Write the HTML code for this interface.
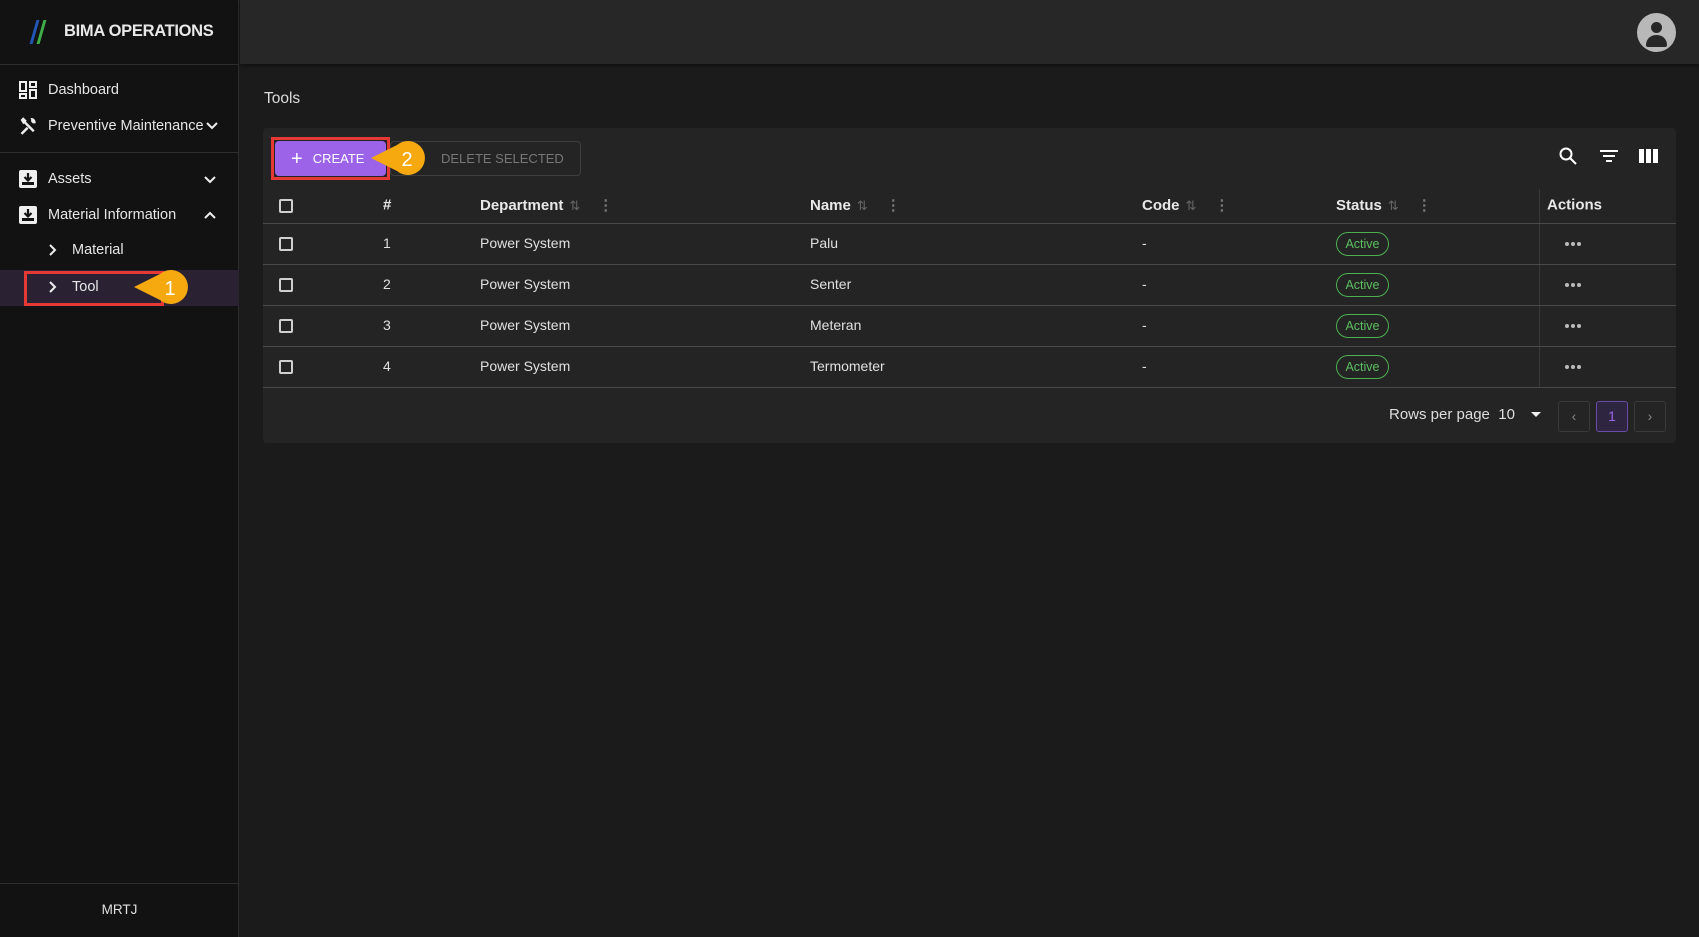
<!DOCTYPE html>
<html><head><meta charset="utf-8"><style>
*{box-sizing:border-box;margin:0;padding:0}
body{width:1699px;height:937px;background:#1b1b1b;font-family:"Liberation Sans",sans-serif;color:#e0e0e0;position:relative;overflow:hidden;font-size:14px}
.abs{position:absolute}
#side{left:0;top:0;width:239px;height:937px;background:#121212;border-right:1px solid #2c2c2c}
.hr{position:absolute;left:0;width:239px;height:1px;background:#2e2e2e}
.nav{position:absolute;left:48px;font-size:14.5px;color:#e6e6e6;transform:translateY(-50%)}
.ic{position:absolute;left:18px;transform:translateY(-50%)}
#top{left:240px;top:0;width:1459px;height:64px;background:#272727;box-shadow:0 2px 4px rgba(0,0,0,.4)}
#card{left:263px;top:128px;width:1413px;height:315px;background:#242424;border-radius:4px}
.th{position:absolute;top:205px;transform:translateY(-50%);font-weight:bold;font-size:15px;color:#e8e8e8}
.td{position:absolute;transform:translateY(-50%);font-size:14px;color:#e0e0e0}
.cb{position:absolute;left:279px;width:14px;height:14px;border:2px solid #d0d0d0;border-radius:2px;transform:translateY(-50%)}
.rl{position:absolute;left:263px;width:1413px;height:1px;background:#4a4a4a}
.badge{position:absolute;left:1336px;width:53px;height:24px;border:1px solid #4caf50;border-radius:12px;color:#5cbf60;font-size:12.5px;text-align:center;line-height:22px;transform:translateY(-50%)}
.dots{position:absolute;left:1564px;transform:translateY(-50%)}
.srt{color:#666;font-weight:normal;font-size:13px;margin-left:6px}
.kb{color:#777;font-weight:bold;margin-left:18px}
.pg{position:absolute;top:401px;width:32px;height:31px;border:1px solid #3a3a3a;border-radius:3px;color:#888;text-align:center;line-height:29px;font-size:14px}
.chev{position:absolute;left:204px;transform:translateY(-50%)}
</style></head><body>
<div id="side" class="abs">
 <div class="abs" style="left:33px;top:20px;width:3px;height:24px;background:#2456b8;transform:skewX(-16deg)"></div>
 <div class="abs" style="left:40px;top:20px;width:3px;height:24px;background:#3fae49;transform:skewX(-16deg)"></div>
 <div class="abs" style="left:64px;top:22px;font-weight:bold;font-size:16.5px;color:#e8e8e8;letter-spacing:-.3px">BIMA OPERATIONS</div>
 <div class="hr" style="top:64px"></div>
 <div class="hr" style="top:152px"></div>
 <div class="hr" style="top:883px"></div>
 <svg class="ic" style="top:90px" width="20" height="20" viewBox="0 0 20 20" fill="none" stroke="#eee" stroke-width="2"><rect x="2" y="2" width="6" height="9"/><rect x="12" y="2" width="6" height="5"/><rect x="2" y="14" width="6" height="4"/><rect x="12" y="10" width="6" height="8"/></svg>
 <div class="nav" style="top:90px">Dashboard</div>
 <svg class="ic" style="top:126px" width="21" height="21" viewBox="0 0 24 24" fill="#eee"><path d="M3 5l3-3 4 4-1 1 10 10-2 2L7 9 6 10z M14 3a5 5 0 0 1 6 6l-3 0-2-2 0-3z M10 13l-7 7 2 2 7-7z"/></svg>
 <div class="nav" style="top:126px">Preventive Maintenance</div>
 <svg class="abs" style="left:206px;top:121px" width="12" height="10" viewBox="0 0 12 10" fill="none" stroke="#eee" stroke-width="2"><path d="M1 2l5 5 5-5"/></svg>
 <svg class="ic" style="top:179px" width="20" height="20" viewBox="0 0 20 20"><rect x="1" y="1" width="18" height="18" rx="2" fill="#eee"/><path d="M10 4v7M6.5 8l3.5 3.5 3.5-3.5" stroke="#121212" stroke-width="2.2" fill="none"/><rect x="4" y="13" width="12" height="3" fill="#121212"/></svg>
 <div class="nav" style="top:179px">Assets</div>
 <svg class="chev" style="top:180px" width="12" height="10" viewBox="0 0 12 10" fill="none" stroke="#eee" stroke-width="2"><path d="M1 2l5 5 5-5"/></svg>
 <svg class="ic" style="top:215px" width="20" height="20" viewBox="0 0 20 20"><rect x="1" y="1" width="18" height="18" rx="2" fill="#eee"/><path d="M10 4v7M6.5 8l3.5 3.5 3.5-3.5" stroke="#121212" stroke-width="2.2" fill="none"/><rect x="4" y="13" width="12" height="3" fill="#121212"/></svg>
 <div class="nav" style="top:215px">Material Information</div>
 <svg class="chev" style="top:215px" width="12" height="10" viewBox="0 0 12 10" fill="none" stroke="#eee" stroke-width="2"><path d="M1 8l5-5 5 5"/></svg>
 <div class="abs" style="left:0;top:270px;width:239px;height:36px;background:#2a2233"></div>
 <svg class="abs" style="left:48px;top:244px" width="10" height="12" viewBox="0 0 10 12" fill="none" stroke="#eee" stroke-width="2"><path d="M2 1l5 5-5 5"/></svg>
 <div class="nav" style="left:72px;top:250px">Material</div>
 <svg class="abs" style="left:48px;top:281px" width="10" height="12" viewBox="0 0 10 12" fill="none" stroke="#eee" stroke-width="2"><path d="M2 1l5 5-5 5"/></svg>
 <div class="nav" style="left:72px;top:287px">Tool</div>
 <div class="abs" style="left:24px;top:271px;width:140px;height:35px;border:3px solid #e53935"></div>
 <svg class="abs" style="left:132px;top:266px" width="66" height="42" viewBox="0 0 66 42"><path d="M2 21 L28 8 A17 17 0 1 1 28 34 Z" fill="#f5a90f"/><text x="38" y="29" fill="#fff" font-size="20" font-family="Liberation Sans" text-anchor="middle">1</text></svg>
 <div class="abs" style="left:0;top:902px;width:239px;text-align:center;font-size:13.5px">MRTJ</div>
</div>
<div id="top" class="abs"></div>
<div class="abs" style="left:1637px;top:13px;width:39px;height:39px;border-radius:50%;background:#b8b8b8;overflow:hidden">
 <div class="abs" style="left:14px;top:9px;width:11px;height:11px;border-radius:50%;background:#272727"></div>
 <div class="abs" style="left:9px;top:22px;width:21px;height:12px;border-radius:10px 10px 2px 2px;background:#272727"></div>
</div>
<div class="abs" style="left:264px;top:90px;font-size:15.5px;color:#ddd">Tools</div>
<div id="card" class="abs"></div>
<div class="abs" style="left:275px;top:141px;width:111px;height:35px;background:#9c63e8;border-radius:4px;color:#fff;font-size:13px;line-height:35px;padding-left:16px"><span style="font-size:20px;vertical-align:-2px;margin-right:10px">+</span>CREATE</div>
<div class="abs" style="left:271px;top:137px;width:119px;height:43px;border:3px solid #e53935"></div>
<div class="abs" style="left:390px;top:141px;width:191px;height:35px;border:1px solid #3e3e3e;border-radius:4px;color:#777;font-size:13px;line-height:33px;padding-left:50px">DELETE SELECTED</div>
<svg class="abs" style="left:369px;top:137px" width="66" height="42" viewBox="0 0 66 42"><path d="M2 21 L28 8 A17 17 0 1 1 28 34 Z" fill="#f5a90f"/><text x="38" y="29" fill="#fff" font-size="20" font-family="Liberation Sans" text-anchor="middle">2</text></svg>
<svg class="abs" style="left:1558px;top:146px" width="20" height="20" viewBox="0 0 20 20" fill="none" stroke="#fff" stroke-width="2"><circle cx="8" cy="8" r="5.5"/><path d="M12 12l6 6"/></svg>
<svg class="abs" style="left:1599px;top:148px" width="20" height="16" viewBox="0 0 20 16" fill="#fff"><rect x="1" y="2" width="18" height="2"/><rect x="4" y="7" width="12" height="2"/><rect x="7" y="12" width="6" height="2"/></svg>
<svg class="abs" style="left:1639px;top:148px" width="19" height="16" viewBox="0 0 19 16" fill="#fff"><rect x="0" y="1" width="5" height="14"/><rect x="7" y="1" width="5" height="14"/><rect x="14" y="1" width="5" height="14"/></svg>
<div class="cb" style="top:206px"></div>
<div class="th" style="left:383px">#</div>
<div class="th" style="left:480px">Department<span class="srt">&#x21C5;</span><span class="kb">&#x22EE;</span></div>
<div class="th" style="left:810px">Name<span class="srt">&#x21C5;</span><span class="kb">&#x22EE;</span></div>
<div class="th" style="left:1142px">Code<span class="srt">&#x21C5;</span><span class="kb">&#x22EE;</span></div>
<div class="th" style="left:1336px">Status<span class="srt">&#x21C5;</span><span class="kb">&#x22EE;</span></div>
<div class="th" style="left:1547px">Actions</div>
<div class="abs" style="left:1539px;top:189px;width:1px;height:198px;background:#383838"></div>
<div class="rl" style="top:223px"></div><div class="rl" style="top:264px"></div><div class="rl" style="top:305px"></div><div class="rl" style="top:346px"></div><div class="rl" style="top:387px"></div>

<div class="cb" style="top:244px"></div><div class="td" style="left:383px;top:243px">1</div><div class="td" style="left:480px;top:243px">Power System</div><div class="td" style="left:810px;top:243px">Palu</div><div class="td" style="left:1142px;top:243px">-</div><div class="badge" style="top:244px">Active</div>
<svg class="dots" style="top:244px" width="18" height="6"><circle cx="3" cy="3" r="2" fill="#bbb"/><circle cx="9" cy="3" r="2" fill="#bbb"/><circle cx="15" cy="3" r="2" fill="#bbb"/></svg>
<div class="cb" style="top:285px"></div><div class="td" style="left:383px;top:284px">2</div><div class="td" style="left:480px;top:284px">Power System</div><div class="td" style="left:810px;top:284px">Senter</div><div class="td" style="left:1142px;top:284px">-</div><div class="badge" style="top:285px">Active</div>
<svg class="dots" style="top:285px" width="18" height="6"><circle cx="3" cy="3" r="2" fill="#bbb"/><circle cx="9" cy="3" r="2" fill="#bbb"/><circle cx="15" cy="3" r="2" fill="#bbb"/></svg>
<div class="cb" style="top:326px"></div><div class="td" style="left:383px;top:325px">3</div><div class="td" style="left:480px;top:325px">Power System</div><div class="td" style="left:810px;top:325px">Meteran</div><div class="td" style="left:1142px;top:325px">-</div><div class="badge" style="top:326px">Active</div>
<svg class="dots" style="top:326px" width="18" height="6"><circle cx="3" cy="3" r="2" fill="#bbb"/><circle cx="9" cy="3" r="2" fill="#bbb"/><circle cx="15" cy="3" r="2" fill="#bbb"/></svg>
<div class="cb" style="top:367px"></div><div class="td" style="left:383px;top:366px">4</div><div class="td" style="left:480px;top:366px">Power System</div><div class="td" style="left:810px;top:366px">Termometer</div><div class="td" style="left:1142px;top:366px">-</div><div class="badge" style="top:367px">Active</div>
<svg class="dots" style="top:367px" width="18" height="6"><circle cx="3" cy="3" r="2" fill="#bbb"/><circle cx="9" cy="3" r="2" fill="#bbb"/><circle cx="15" cy="3" r="2" fill="#bbb"/></svg>

<div class="abs" style="left:1389px;top:406px;font-size:15px;color:#ddd">Rows per page&nbsp;&nbsp;10</div>
<svg class="abs" style="left:1531px;top:412px" width="10" height="6"><path d="M0 0h10L5 5z" fill="#eee"/></svg>
<div class="pg" style="left:1558px">&#x2039;</div>
<div class="pg" style="left:1596px;border-color:#6a4aa8;background:#2e2640;color:#9c63e8">1</div>
<div class="pg" style="left:1634px">&#x203A;</div>
</body></html>
